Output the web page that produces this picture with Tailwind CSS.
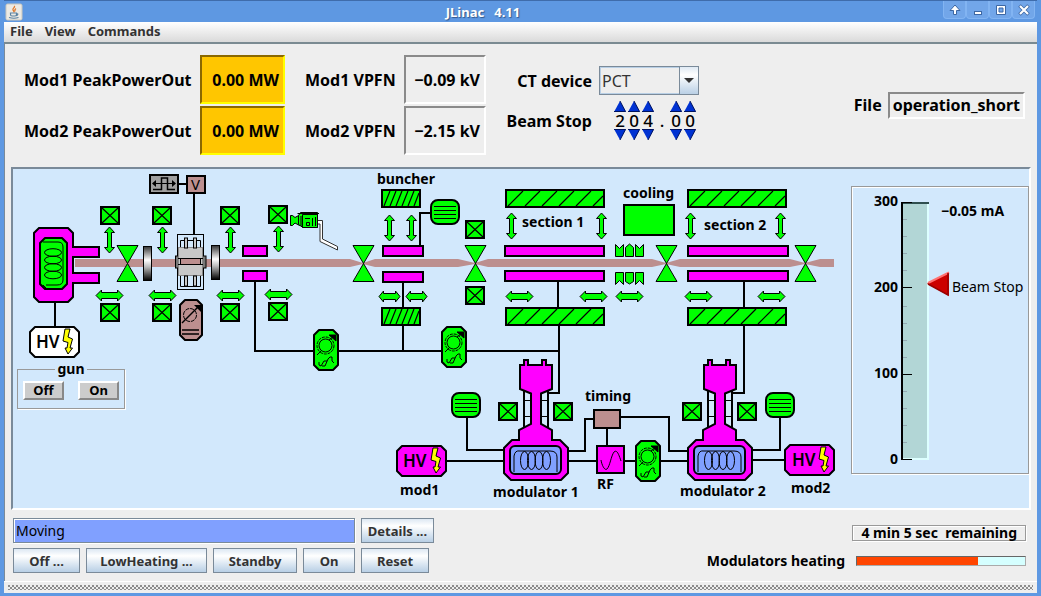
<!DOCTYPE html>
<html lang="en">
<head>
<meta charset="utf-8">
<title>JLinac 4.11</title>
<script src="https://cdn.jsdelivr.net/npm/@tailwindcss/browser@4"></script>
</head>
<body class="flex min-h-screen flex-col border-x-4 border-b-4 border-[#5e98e2] bg-[#eeeeee] font-['Noto_Sans','Open_Sans',sans-serif] text-black">

<!-- Title bar -->
<header class="flex h-[22px] items-center border-t border-[#3f6cab] bg-[#5e98e2] text-white">
  <svg class="ml-px h-[18px] w-[18px] shrink-0" viewBox="0 0 18 18" aria-hidden="true">
    <rect x="1" y="1" width="16" height="16" rx="1.500" fill="#eceae4" stroke="#c9c6bd"/>
    <path d="M9 3c2 1-2 2.500-1 4 .5 1 1.500 1 .8 2.500M11 5.500c-1.500 1-1.500 1.500-1 3" fill="none" stroke="#e0792c" stroke-width="1.300"/>
    <path d="M5.500 10h6v1.500q0 1.500-1.500 1.500H7q-1.500 0-1.500-1.500zM11.500 10.500q2 0 1 1.500l-1.500.7M4 14.500q5 1.500 9.500 0" fill="none" stroke="#5b82a1" stroke-width="1.200"/>
  </svg>
  <h1 class="flex-1 text-center text-[13px] leading-4 font-bold whitespace-pre [text-shadow:1px_1px_1px_#33588c]">JLinac   4.11</h1>
  <div class="mr-0.5 flex self-stretch">
    <button aria-label="Keep above" class="flex h-[18px] w-[23px] items-center justify-center rounded-b-sm border border-t-0 border-[#82b4f2] bg-[#72a6e9]"><svg width="12" height="12" viewBox="0 0 12 12"><path d="M6 1L11 6.500H7.500V10.500H4.500V6.500H1Z" fill="#fff" stroke="#3d67a3"/></svg></button>
    <button aria-label="Minimize" class="flex h-[18px] w-[23px] items-center justify-center rounded-b-sm border border-t-0 border-[#82b4f2] bg-[#72a6e9]"><svg width="12" height="12" viewBox="0 0 12 12"><rect x="2.500" y="7.500" width="7" height="3" fill="#fff" stroke="#3d67a3"/></svg></button>
    <button aria-label="Maximize" class="flex h-[18px] w-[23px] items-center justify-center rounded-b-sm border border-t-0 border-[#82b4f2] bg-[#72a6e9]"><svg width="12" height="12" viewBox="0 0 12 12"><path d="M1.500 1.500h9v9h-9zM4 4v4h4V4z" fill="#fff" fill-rule="evenodd" stroke="#3d67a3"/></svg></button>
    <button aria-label="Close" class="flex h-[18px] w-[23px] items-center justify-center rounded-b-sm border border-t-0 border-[#82b4f2] bg-[#72a6e9]"><svg width="12" height="12" viewBox="0 0 12 12"><path d="M1.500 1.500l9 9M10.500 1.500l-9 9" stroke="#3d67a3" stroke-width="3.600"/><path d="M2 2l8 8M10 2l-8 8" stroke="#fff" stroke-width="2.200"/></svg></button>
  </div>
</header>

<!-- Menu bar -->
<nav class="flex h-[22px] items-center gap-3 border-b-2 border-[#7a8a91] bg-linear-to-b from-white to-[#dadada] px-1.5 pb-0.5 text-[13px] leading-4 font-bold text-[#333333]">
  <button>File</button>
  <button>View</button>
  <button>Commands</button>
</nav>

<main class="flex flex-1 flex-col border-l border-[#7a8a99]">
  <!-- Readings and settings -->
  <section class="flex items-start pt-[11px] pr-[12px] pb-3 pl-[19px] text-[16px] leading-5 font-bold">
    <dl class="grid grid-cols-[176px_85px] items-center gap-y-0.5">
      <dt class="whitespace-nowrap">Mod1 PeakPowerOut</dt>
      <dd class="flex h-[49px] items-center justify-end border-2 border-t-[#8a6800] border-r-[#ffff00] border-b-[#ffff00] border-l-[#8a6800] bg-[#ffc600] pr-1">0.00 MW</dd>
      <dt class="whitespace-nowrap">Mod2 PeakPowerOut</dt>
      <dd class="flex h-[49px] items-center justify-end border-2 border-t-[#8a6800] border-r-[#ffff00] border-b-[#ffff00] border-l-[#8a6800] bg-[#ffc600] pr-1">0.00 MW</dd>
    </dl>
    <dl class="ml-5 grid grid-cols-[99px_82px] items-center gap-y-0.5">
      <dt>Mod1 VPFN</dt>
      <dd class="flex h-[49px] items-center justify-end border-2 border-t-[#8a8a8a] border-r-white border-b-white border-l-[#8a8a8a] pr-1">−0.09 kV</dd>
      <dt>Mod2 VPFN</dt>
      <dd class="flex h-[49px] items-center justify-end border-2 border-t-[#8a8a8a] border-r-white border-b-white border-l-[#8a8a8a] pr-1">−2.15 kV</dd>
    </dl>
    <div class="ml-5 grid grid-cols-[86px_100px] items-center gap-x-[7px] gap-y-1.5 pt-[11px]">
      <label for="ct" class="text-right">CT device</label>
      <div class="relative h-[29px]">
        <select id="ct" class="h-full w-full appearance-none border border-[#7a8a99] bg-[#eeeeee] pl-0.5 font-normal text-[#333333] shadow-[inset_0_0_0_1px_#b8cfe5]"><option>PCT</option></select>
        <svg class="pointer-events-none absolute top-0 right-0 h-[29px] w-5" viewBox="0 0 20 29" aria-hidden="true">
          <defs><linearGradient id="cb" x1="0" y1="0" x2="0" y2="1"><stop offset="0" stop-color="#dde8f3"/><stop offset=".3" stop-color="#fff"/><stop offset="1" stop-color="#b8cfe5"/></linearGradient></defs>
          <rect x=".5" y=".5" width="19" height="28" fill="url(#cb)" stroke="#7a8a99"/><path d="M5 12h10l-5 5z" fill="#333"/>
        </svg>
      </div>
      <span id="bs" class="text-right">Beam Stop</span>
      <div role="group" aria-labelledby="bs" class="flex pl-3.5 text-center text-[17px] leading-[17px] font-medium">
        <div class="flex w-3.5 flex-col items-center"><button aria-label="Hundreds up"><svg class="block" width="12" height="11"><path d="M6 0L12 11H0z" fill="#0032d2"/><path d="M6 0L11.500 10.500H0" fill="none" stroke="#00145f"/></svg></button><span>2</span><button aria-label="Hundreds down"><svg class="block" width="12" height="11"><path d="M0 0H12L6 11z" fill="#0032d2"/><path d="M0 .5H11.500L6 11" fill="none" stroke="#00145f"/></svg></button></div>
        <div class="flex w-3.5 flex-col items-center"><button aria-label="Tens up"><svg class="block" width="12" height="11"><path d="M6 0L12 11H0z" fill="#0032d2"/><path d="M6 0L11.500 10.500H0" fill="none" stroke="#00145f"/></svg></button><span>0</span><button aria-label="Tens down"><svg class="block" width="12" height="11"><path d="M0 0H12L6 11z" fill="#0032d2"/><path d="M0 .5H11.500L6 11" fill="none" stroke="#00145f"/></svg></button></div>
        <div class="flex w-3.5 flex-col items-center"><button aria-label="Units up"><svg class="block" width="12" height="11"><path d="M6 0L12 11H0z" fill="#0032d2"/><path d="M6 0L11.500 10.500H0" fill="none" stroke="#00145f"/></svg></button><span>4</span><button aria-label="Units down"><svg class="block" width="12" height="11"><path d="M0 0H12L6 11z" fill="#0032d2"/><path d="M0 .5H11.500L6 11" fill="none" stroke="#00145f"/></svg></button></div>
        <span class="w-3.5 self-center">.</span>
        <div class="flex w-3.5 flex-col items-center"><button aria-label="Tenths up"><svg class="block" width="12" height="11"><path d="M6 0L12 11H0z" fill="#0032d2"/><path d="M6 0L11.500 10.500H0" fill="none" stroke="#00145f"/></svg></button><span>0</span><button aria-label="Tenths down"><svg class="block" width="12" height="11"><path d="M0 0H12L6 11z" fill="#0032d2"/><path d="M0 .5H11.500L6 11" fill="none" stroke="#00145f"/></svg></button></div>
        <div class="flex w-3.5 flex-col items-center"><button aria-label="Hundredths up"><svg class="block" width="12" height="11"><path d="M6 0L12 11H0z" fill="#0032d2"/><path d="M6 0L11.500 10.500H0" fill="none" stroke="#00145f"/></svg></button><span>0</span><button aria-label="Hundredths down"><svg class="block" width="12" height="11"><path d="M0 0H12L6 11z" fill="#0032d2"/><path d="M0 .5H11.500L6 11" fill="none" stroke="#00145f"/></svg></button></div>
      </div>
    </div>
    <div class="ml-auto flex items-center gap-1.5 self-center">
      <span>File</span>
      <span class="border-2 border-t-[#8a8a8a] border-r-white border-b-white border-l-[#8a8a8a] px-[3px] pt-px pb-0.5">operation_short</span>
    </div>
  </section>

  <!-- Beam line -->
  <section class="mr-1.5 ml-1.5 flex border-2 border-t-[#7a8a99] border-r-white border-b-white border-l-[#7a8a99] bg-[#d2e8fc]">
    <div class="relative shrink-0">
      <svg class="block h-[339px] w-[838px]" viewBox="13 169 838 339" font-weight="700" font-size="14" role="img" aria-label="Linac beam line">
        <defs>
          <linearGradient id="lens" x1="0" y1="0" x2="0" y2="1"><stop offset="0" stop-color="#333"/><stop offset=".4" stop-color="#fff"/><stop offset=".6" stop-color="#bbb"/><stop offset="1"/></linearGradient>
          <g id="xb" stroke="#000"><rect x="1" y="1" width="18" height="17" fill="#0f0" stroke-width="2"/><path d="M2 2L18 17M18 2L2 17" stroke-width="1.200"/></g>
          <path id="va" d="M.5-13L5.500-7.500H2.500V7.500H5.500L.5 13L-4.500 7.500H-1.500V-7.500H-4.500Z" fill="#0f0" stroke="#000"/>
          <path id="ha" d="M-13 .5L-7.500-5V-2.500H8.500V-5L14 .5L8.500 6V3.500H-7.500V6Z" fill="#0f0" stroke="#000"/>
          <path id="hs" d="M-10 .5L-5.500-5V-2.500H6.500V-5L11 .5L6.500 6V3.500H-5.500V6Z" fill="#0f0" stroke="#000"/>
          <path id="valve" d="M-10-17.500H11L.5 .5L11 18.500H-10L.5 .5Z" fill="#0f0" stroke="#000"/>
          <g id="fan" stroke="#000"><rect x="1" y="1" width="28" height="24" rx="7" fill="#0f0" stroke-width="2"/><path d="M4 7.500H26M4 11.500H26M4 15.500H26M4 19.500H26"/></g>
          <g id="knob" fill="none" stroke="#000"><path d="M6 1H20L25 6V36L20 41H6L1 36V6Z" fill="#0f0" stroke-width="2" stroke-linejoin="round"/><circle cx="12.500" cy="16.500" r="8.500" stroke-dasharray="3 1"/><circle cx="12.500" cy="16.500" r="6.500"/><path d="M4 26L8 22M16 11L20 8"/><path d="M16 6H23V12Z" fill="#000"/><path d="M6 33V36L8 37L11 32H14M9 37H12L15 30L17 28H19V32L21 34"/></g>
          <path id="bolt" d="M2 0H7L5 8L9.500 10L7 19H9.500L5 25L2 19H4L5 13.500L0 12Z" fill="#ff0" stroke="#000" stroke-linejoin="round"/>
          <g id="mod" stroke="#000" fill="#ff00ff">
            <path d="M524 390h6v36h-6zM542 390h6v36h-6z" fill="#d2e8fc" stroke="none"/><path d="M524 388V430M548 388V430" stroke-width="2"/><path d="M524 400.500h7M524 416.500h7M541 400.500h7M541 416.500h7"/>
            <path d="M520 365H524V360H528V365H542V360H546V365H552V389L541 393.500V424L552 430V440H560L568 448V473L561 480H511L504 473V448L512 440H519V430L531 424V393.500L520 389Z" stroke-width="2"/>
            <rect x="510" y="446" width="51" height="28" rx="5" fill="#80a0ff" stroke-width="2"/>
            <path d="M514 472V456Q515 450 520 451H550Q557 451 557 457V472" fill="none"/>
            <g fill="none"><ellipse cx="524.500" cy="460.500" rx="4" ry="9"/><ellipse cx="531.500" cy="460.500" rx="4" ry="9"/><ellipse cx="539" cy="460.500" rx="4" ry="9"/><ellipse cx="546.500" cy="460.500" rx="4" ry="9"/></g>
          </g>
          <g id="hvbox"><path d="M6 1H45L50 6V26L45 31H6L1 26V6Z" stroke="#000" stroke-width="2" stroke-linejoin="round"/></g>
        </defs>

        <!-- wiring -->
        <path d="M55 302V327M178 184H186M194 194V235M255 282V351H559M403 283V351M420 246V213H431M558 282V307M559 326V393H543M744 282V307M744 326V393H728M467 418V450H506M446 461H504M567 461H688M567 451H585V419H593M621 417H669V451H689M607 429V445M780 418V450H751M752 460H785" fill="none" stroke="#000" stroke-width="2"/>

        <!-- beam -->
        <path fill="#bc8f8f" d="M75 259H350L363 263L375 259H458L475 263L488 259H652L666 263L680 259H790L805 263L820 259H834V267H820L805 264L790 267H680L666 264L652 267H488L475 264L458 267H375L363 264L350 267H75Z"/>

        <!-- gun -->
        <path d="M39 228H68L73 233V247H99V257H73V273H99V283H73V297L68 302H39L34 297V233Z" fill="#f0f" stroke="#000" stroke-width="2"/>
        <path d="M45 238H62L67 243V284L62 289H45L40 284V243Z" fill="#0f0" stroke="#000" stroke-width="2" stroke-linejoin="round"/>
        <g fill="none" stroke="#000"><path d="M43 242H58Q63 242 63 247V280Q63 285 57 285H46M43 285L46 288"/><ellipse cx="53" cy="252.500" rx="8.500" ry="3.800"/><ellipse cx="53" cy="260" rx="8.500" ry="3.800"/><ellipse cx="53" cy="267.500" rx="8.500" ry="3.800"/><ellipse cx="53" cy="275" rx="8.500" ry="3.800"/></g>
        <use href="#hvbox" x="29" y="326" fill="#fff"/><text x="36" y="348" font-size="17" font-weight="600">HV</text><use href="#bolt" x="63" y="329"/>

        <!-- pulse generator and voltage -->
        <rect x="150" y="175" width="28" height="18" fill="#a0a0a0" stroke="#000" stroke-width="2"/>
        <path d="M153 189.500H161.500V178H167.500V189.500H175" fill="none" stroke="#000" stroke-width="1.500"/>
        <path d="M153 183.500H175" stroke="#000"/><path d="M152 183.500L156 180V187ZM176 183.500L172 180V187Z"/>
        <rect x="187" y="176" width="18" height="17" fill="#bc8f8f" stroke="#000" stroke-width="2"/><text x="191" y="190" font-size="15" font-weight="400">V</text>

        <!-- solenoid lenses -->
        <rect x="143.500" y="246.500" width="8" height="34" fill="url(#lens)" stroke="#000"/>
        <rect x="211.500" y="245.500" width="8" height="34" fill="url(#lens)" stroke="#000"/>

        <!-- gate -->
        <g stroke="#000" fill="#c8c8c8"><rect x="177.500" y="234.500" width="26" height="55" fill="none"/><path d="M180.500 248V240.500H200.500V248M180.500 276V286.500H200.500V276" fill="none"/><rect x="175.500" y="256" width="4" height="12" fill="#777"/><rect x="202" y="256" width="4" height="12" fill="#777"/><rect x="178.500" y="247.500" width="24" height="28" stroke="#888"/><rect x="184.500" y="238" width="3" height="10"/><rect x="193.500" y="238" width="3" height="10"/><rect x="184.500" y="276" width="3" height="10"/><rect x="193.500" y="276" width="3" height="10"/><path d="M178 258.500H203M178 264.500H203" fill="none"/><rect x="180.500" y="258.500" width="20" height="6" fill="#bc8f8f"/></g>

        <!-- attenuator -->
        <path d="M185 300H197L202 305V335L197 340H185L180 335V305Z" fill="#bc8f8f" stroke="#000" stroke-width="2" stroke-linejoin="round"/>
        <g fill="none" stroke="#000"><circle cx="190" cy="315" r="6.500" stroke-dasharray="4 1"/><path d="M182 323L198 307" stroke-width="1.500"/><path d="M182 330H199M182 334H199" stroke-width="1.500"/></g><path d="M194 305H201V312Z"/>

        <!-- steering coils -->
        <use href="#xb" x="100" y="206"/><use href="#xb" x="152" y="206"/><use href="#xb" x="220" y="206"/><use href="#xb" x="268" y="205"/>
        <use href="#xb" x="100" y="303"/><use href="#xb" x="152" y="303"/><use href="#xb" x="220" y="303"/><use href="#xb" x="268" y="302"/>
        <use href="#xb" x="465" y="220"/><use href="#xb" x="465" y="286"/>
        <use href="#xb" x="498" y="402"/><use href="#xb" x="553" y="402"/><use href="#xb" x="682" y="402"/><use href="#xb" x="737" y="402"/>
        <use href="#va" x="109" y="240"/><use href="#va" x="162" y="240"/><use href="#va" x="230" y="240"/><use href="#va" x="278" y="239"/>
        <use href="#va" x="389" y="228"/><use href="#va" x="411" y="228"/><use href="#va" x="511" y="226"/><use href="#va" x="601" y="226"/><use href="#va" x="690" y="226"/><use href="#va" x="780" y="226"/>
        <use href="#ha" x="109" y="295"/><use href="#ha" x="162" y="295"/><use href="#ha" x="230" y="295"/><use href="#ha" x="278" y="294"/>
        <use href="#hs" x="389" y="296"/><use href="#hs" x="416" y="296"/>
        <use href="#ha" x="519" y="296"/><use href="#ha" x="593" y="296"/><use href="#ha" x="629" y="296"/><use href="#ha" x="698" y="296"/><use href="#ha" x="771" y="296"/>

        <!-- valves -->
        <use href="#valve" x="127" y="263"/><use href="#valve" x="363" y="263"/><use href="#valve" x="475" y="263"/><use href="#valve" x="666" y="263"/><use href="#valve" x="805" y="263"/>

        <!-- accelerating structures -->
        <g fill="#f0f" stroke="#000" stroke-width="2">
          <rect x="243" y="246" width="24" height="10"/><rect x="243" y="271" width="24" height="10"/>
          <rect x="383" y="246" width="40" height="10"/><rect x="383" y="272" width="40" height="10"/>
          <rect x="505" y="246" width="99" height="10"/><rect x="505" y="271" width="99" height="10"/>
          <rect x="688" y="246" width="100" height="10"/><rect x="688" y="271" width="100" height="10"/>
        </g>
        <g fill="#0f0" stroke="#000" stroke-width="2">
          <rect x="382" y="190" width="38" height="17"/><rect x="382" y="308" width="38" height="17"/>
          <rect x="506" y="190" width="98" height="17"/><rect x="506" y="308" width="98" height="17"/>
          <rect x="688" y="190" width="98" height="17"/><rect x="688" y="308" width="98" height="17"/>
          <rect x="624" y="205" width="50" height="30"/>
        </g>
        <g fill="none" stroke="#000" stroke-width="1.200">
          <path id="bh" d="M384 206L390 191M390 206L396 191M396 206L402 191M402 206L408 191M408 206L414 191M414 206L419 193"/>
          <use href="#bh" y="118"/>
          <path id="sh" d="M508 206L523 191M525 206L540 191M542 206L557 191M559 206L574 191M576 206L591 191M593 206L603 196"/>
          <use href="#sh" y="118"/><use href="#sh" x="182"/><use href="#sh" x="182" y="118"/>
        </g>

        <!-- cooling fins -->
        <g fill="#0f0" stroke="#000">
          <path d="M615.500 256.500V244.500L619.500 248.500L623.500 244.500V256.500ZM625.500 256.500V247.500L629.500 244L633.500 247.500V256.500ZM635.500 256.500V244.500L639.500 248.500L643.500 244.500V256.500Z"/>
          <path d="M615.500 272.500V284.500L619.500 280.500L623.500 284.500V272.500ZM625.500 272.500V281.500L629.500 284L633.500 281.500V272.500ZM635.500 272.500V284.500L639.500 280.500L643.500 284.500V272.500Z"/>
        </g>

        <!-- camera -->
        <path d="M317 220.500H322.500V239L337.500 246.500V250L320 241.500V224H317" fill="#fff" stroke="#333"/>
        <g fill="#0f0" stroke="#000"><path d="M290.500 215.500H292.500L295 217.500L299.500 215V225.500L295 223L292.500 225.500H290.500Z"/><path d="M298.500 215.500L300.500 212.500H317.500V227.500H303L298.500 224.500Z"/><path d="M302.500 214.500H317.500V227.500H302.500Z"/><path d="M306.500 222.500H309.500V225.500H306.500ZM312.500 218V226M315.500 217V226M305 218.500H310M297.500 213.500H319M301 216V226" /></g>

        <!-- devices -->
        <use href="#fan" x="430" y="199"/><use href="#fan" x="451" y="392"/><use href="#fan" x="765" y="392"/>
        <use href="#knob" x="313" y="329"/><use href="#knob" x="441" y="326"/><use href="#knob" x="635" y="440"/>
        <use href="#mod"/><use href="#mod" x="184"/>
        <use href="#hvbox" x="396" y="445" fill="#f0f"/><text x="403" y="467" font-size="17" font-weight="600">HV</text><use href="#bolt" x="431" y="448"/>
        <use href="#hvbox" x="784" y="444" fill="#f0f"/><text x="792" y="466" font-size="17" font-weight="600">HV</text><use href="#bolt" x="819" y="447"/>
        <rect x="594" y="410" width="26" height="18" fill="#bc8f8f" stroke="#000" stroke-width="2"/>
        <rect x="597" y="446" width="27" height="27" fill="#f0f" stroke="#000" stroke-width="2"/>
        <path d="M601 460C602 466 605 471 607 469C610 466 611 456 614 452C617 449 619 455 621 461" fill="none" stroke="#000"/>

        <text x="377" y="184">buncher</text>
        <text x="522" y="227">section 1</text>
        <text x="704" y="230">section 2</text>
        <text x="623" y="198">cooling</text>
        <text x="585" y="401">timing</text>
        <text x="597" y="489">RF</text>
        <text x="400" y="495">mod1</text>
        <text x="493" y="497">modulator 1</text>
        <text x="680" y="496">modulator 2</text>
        <text x="791" y="493">mod2</text>
      </svg>
      <!-- gun switch, pinned below the gun symbol -->
      <fieldset class="absolute top-[192px] left-1 flex w-[108px] justify-between border border-[#999999] px-[5px] pt-1 pb-2 text-[13px] leading-4 font-bold shadow-[1px_1px_0_#fff]">
        <legend class="mx-auto px-0.5 text-[14px]">gun</legend>
        <button class="h-[19px] w-[41px] border-2 border-t-white border-r-[#888888] border-b-[#888888] border-l-white bg-[#cccccc] leading-[15px]">Off</button>
        <button class="h-[19px] w-[41px] border-2 border-t-white border-r-[#888888] border-b-[#888888] border-l-white bg-[#cccccc] leading-[15px]">On</button>
      </fieldset>
    </div>
    <!-- beam current gauge -->
    <div class="mt-[17px] ml-auto h-[288px] border border-[#999999] shadow-[inset_1px_1px_0_#fff,1px_1px_0_#fff]">
      <svg class="block h-[286px] w-[176px]" viewBox="852 187 176 286" font-size="14" font-weight="700" role="img" aria-label="Beam current −0.05 mA">
        <rect x="902" y="202" width="27" height="258" fill="#b2d6d6"/>
        <path d="M928 203V460M903 459H929" stroke="#dff" stroke-width="2"/>
        <path d="M902 203H929" stroke="#2f4f4f" stroke-width="2"/>
        <path d="M903 219.500h4M903 236.500h4M903 253.500h4M903 270.500h4M903 306.500h4M903 323.500h4M903 340.500h4M903 357.500h4M903 391.500h4M903 408.500h4M903 425.500h4M903 442.500h4" stroke="#96aab4"/>
        <path d="M902 202V460" stroke="#000" stroke-width="2"/><path d="M902 202.500h10M902 287.500h10M902 374.500h10M902 459.500h10" stroke="#000"/>
        <g text-anchor="end"><text x="898" y="206">300</text><text x="898" y="292">200</text><text x="898" y="378">100</text><text x="898" y="464">0</text></g>
        <path d="M927 283.500L949 272V296Z" fill="#c00"/><path d="M928 283L949 272.500" stroke="#ff7070" stroke-width="2"/><path d="M928 284L948 295V273" fill="none" stroke="#900" stroke-width="1.500"/>
        <text x="941" y="216">−0.05 mA</text>
        <text x="952" y="292" font-weight="400">Beam Stop</text>
      </svg>
    </div>
  </section>

  <!-- Commands and progress -->
  <section class="flex flex-1 justify-between pt-2 pr-[11px] pb-2 pl-2 text-[13px] leading-4 font-bold text-[#333333]">
    <div class="flex flex-col gap-[5px]">
      <div class="flex gap-1.5">
        <input aria-label="State" readonly value="Moving" class="h-[25px] w-[342px] border border-[#7a8a99] bg-[#80a0ff] pl-0.5 text-[14px] font-normal text-black shadow-[inset_1px_1px_0_#fff,1px_1px_0_#fff]">
        <button class="h-[25px] w-[73px] border border-[#7a8a99] bg-linear-to-b from-[#dde8f3] via-white via-30% to-[#b8cfe5]">Details ...</button>
      </div>
      <div class="flex gap-1.5">
        <button class="h-[25px] w-[67px] border border-[#7a8a99] bg-linear-to-b from-[#dde8f3] via-white via-30% to-[#b8cfe5]">Off ...</button>
        <button class="h-[25px] w-[121px] border border-[#7a8a99] bg-linear-to-b from-[#dde8f3] via-white via-30% to-[#b8cfe5]">LowHeating ...</button>
        <button class="h-[25px] w-[84px] border border-[#7a8a99] bg-linear-to-b from-[#dde8f3] via-white via-30% to-[#b8cfe5]">Standby</button>
        <button class="h-[25px] w-[52px] border border-[#7a8a99] bg-linear-to-b from-[#dde8f3] via-white via-30% to-[#b8cfe5]">On</button>
        <button class="h-[25px] w-[68px] border border-[#7a8a99] bg-linear-to-b from-[#dde8f3] via-white via-30% to-[#b8cfe5]">Reset</button>
      </div>
    </div>
    <div class="flex flex-col items-end gap-3 pt-[7px] text-[14px] text-black">
      <div class="border border-[#999999] px-2 leading-[14px] whitespace-pre shadow-[inset_1px_1px_0_#fff,1px_1px_0_#fff]">4 min 5 sec  remaining</div>
      <div class="flex items-center gap-[11px]">
        <span id="heat">Modulators heating</span>
        <div role="progressbar" aria-labelledby="heat" aria-valuenow="72" class="h-[10px] w-[170px] border border-t-[#666666] border-r-[#aaaaaa] border-b-[#aaaaaa] border-l-[#666666] bg-[#d5ffff]"><div class="h-full bg-[#ff4500]" style="width:72%"></div></div>
      </div>
    </div>
  </section>
</main>

<!-- Status strip -->
<footer class="border-t border-white px-1 py-[3px]">
  <div class="h-[5px] bg-[radial-gradient(circle_at_1px_1px,#8d8d8d_1px,transparent_1px),radial-gradient(circle_at_3px_3px,#8d8d8d_1px,transparent_1px)] bg-size-[4px_4px]"></div>
</footer>
</body>
</html>
